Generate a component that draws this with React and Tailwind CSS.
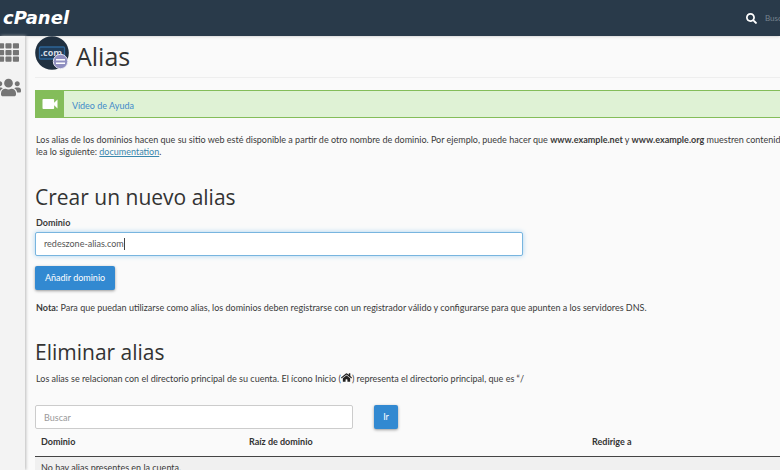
import React, { useState } from "react";
import { FaHome, FaSearch, FaTh, FaUsers } from "react-icons/fa";
import { MdVideocam } from "react-icons/md";

const columns = [
  { title: "Dominio", width: "w-[208px]" },
  { title: "Raíz de dominio", width: "w-[343px]" },
  { title: "Redirige a", width: "" },
];

function Header() {
  return (
    <header className="flex h-9 shrink-0 items-center justify-between bg-[#293a4a] pl-[3px] shadow-sm">
      <a href="#inicio" className="font-['DejaVu_Sans',sans-serif] text-[18px] leading-5 font-bold text-white italic">
        cPanel
      </a>
      <label className="flex w-[34px] items-center gap-2 overflow-hidden text-white">
        <FaSearch className="size-[11px] shrink-0" />
        <input
          type="text"
          placeholder="Buscar"
          aria-label="Buscar"
          className="w-20 shrink-0 bg-transparent text-[8px] outline-none placeholder:text-[#77838e]"
        />
      </label>
    </header>
  );
}

function Sidebar() {
  return (
    <nav className="flex w-[25px] shrink-0 flex-col items-center gap-3 overflow-hidden bg-[#f3f3f3] pt-1.5 pr-2 text-[#757575] shadow-[1px_0_3px_#bbb]">
      <a href="#herramientas" aria-label="Herramientas">
        <FaTh className="size-[21px]" />
      </a>
      <a href="#usuarios" aria-label="Usuarios">
        <FaUsers className="size-[25px]" />
      </a>
    </nav>
  );
}

function AliasIcon() {
  return (
    <svg viewBox="0 0 34 34" className="size-[34px] shrink-0" aria-hidden="true">
      <circle cx="17" cy="17" r="16.8" fill="#203040" />
      <rect x="4.5" y="11" width="25" height="12" rx="1" fill="#203d5a" stroke="#2d6496" strokeWidth="1.3" />
      <text x="5.5" y="19.5" fontFamily="Open Sans, sans-serif" fontSize="9" fontWeight="700" fill="#d6dce3">
        .com
      </text>
      <circle cx="25.5" cy="25.5" r="7.2" fill="#8f8fc0" stroke="#e6e6f2" strokeWidth="1" />
      <path d="M21 23.8h9M21 27.2h9" stroke="#fff" strokeWidth="1.5" />
    </svg>
  );
}

export default function App() {
  const [domain, setDomain] = useState("redeszone-alias.com");

  return (
    <div className="flex h-screen flex-col overflow-hidden bg-[#fafafa] font-['Lato',sans-serif] text-[9px] leading-3 text-[#3a3a3a]">
      <Header />
      <div className="flex min-h-0 flex-1">
        <Sidebar />
        <main className="min-w-0 flex-1 overflow-hidden pl-[10px] whitespace-nowrap">
          <div className="flex h-[42px] items-start gap-[7px] border-b border-[#eee]">
            <AliasIcon />
            <h1 className="pt-1 font-['Open_Sans'] text-[25px] leading-8 text-[#333]">Alias</h1>
          </div>

          <div className="mt-3 flex h-7 items-stretch border border-r-0 border-[#84bd5a] bg-[#dff2d5]">
            <span className="flex w-7 items-center justify-center bg-[#84bd5a] text-white">
              <MdVideocam className="size-5" />
            </span>
            <a href="#video" className="flex items-center pt-1 pl-2 text-[#428bca]">
              Vídeo de Ayuda
            </a>
          </div>

          <p className="mt-4 pl-px">
            Los alias de los dominios hacen que su sitio web esté disponible a partir de otro nombre de dominio. Por
            ejemplo, puede hacer que <b>www.example.net</b> y <b>www.example.org</b> muestren contenido
            <br />
            lea lo siguiente:{" "}
            <a href="#docs" className="text-[#3a87ad] underline">
              documentation
            </a>
            .
          </p>

          <h2 className="mt-[25px] font-['Open_Sans'] text-[21px] leading-7 text-[#333]">Crear un nuevo alias</h2>
          <form onSubmit={(e) => e.preventDefault()}>
            <label htmlFor="domain" className="mt-1.5 block pl-px font-bold">
              Dominio
            </label>
            <div className="mt-[3px] flex h-6 w-[488px] max-w-full items-center rounded-xs border border-[#78b5df] bg-white pl-2 shadow-[0_0_5px_#a9d2f0]">
              <input
                id="domain"
                type="text"
                value={domain}
                onChange={(e) => setDomain(e.target.value)}
                className="field-sizing-content bg-transparent text-[#555] outline-none"
              />
              <span className="h-3 w-px bg-[#444]" />
            </div>
            <button className="mt-2.5 h-6 rounded-xs bg-[#3289d1] px-[10px] text-white shadow-[0_1px_3px_#999]">
              Añadir dominio
            </button>
          </form>
          <p className="mt-3 pl-px">
            <b>Nota:</b> Para que puedan utilizarse como alias, los dominios deben registrarse con un registrador válido
            y configurarse para que apunten a los servidores DNS.
          </p>

          <h2 className="mt-6 font-['Open_Sans'] text-[21px] leading-7 text-[#333]">Eliminar alias</h2>
          <p className="mt-1.5 pl-px">
            Los alias se relacionan con el directorio principal de su cuenta. El ícono Inicio (
            <FaHome className="inline size-[11px] align-[-1px] text-[#222]" />) representa el directorio principal, que
            es “/
          </p>

          <form onSubmit={(e) => e.preventDefault()} className="mt-5 flex gap-[21px]">
            <input
              type="text"
              placeholder="Buscar"
              aria-label="Buscar alias"
              className="h-6 w-[318px] rounded-xs border border-[#ccc] bg-white px-2 outline-none placeholder:text-[#999]"
            />
            <button className="h-6 w-6 rounded-xs bg-[#3289d1] text-white shadow-[0_1px_3px_#999]">Ir</button>
          </form>

          <table className="w-full table-fixed text-left">
            <thead>
              <tr className="h-[27px] border-b border-[#444]">
                {columns.map((col) => (
                  <th key={col.title} className={`${col.width} pl-1.5 font-bold text-[#333]`}>
                    {col.title}
                  </th>
                ))}
              </tr>
            </thead>
            <tbody>
              <tr className="h-6 bg-[#f0f0f0]">
                <td colSpan={3} className="pl-1.5">
                  No hay alias presentes en la cuenta.
                </td>
              </tr>
            </tbody>
          </table>
        </main>
      </div>
    </div>
  );
}
